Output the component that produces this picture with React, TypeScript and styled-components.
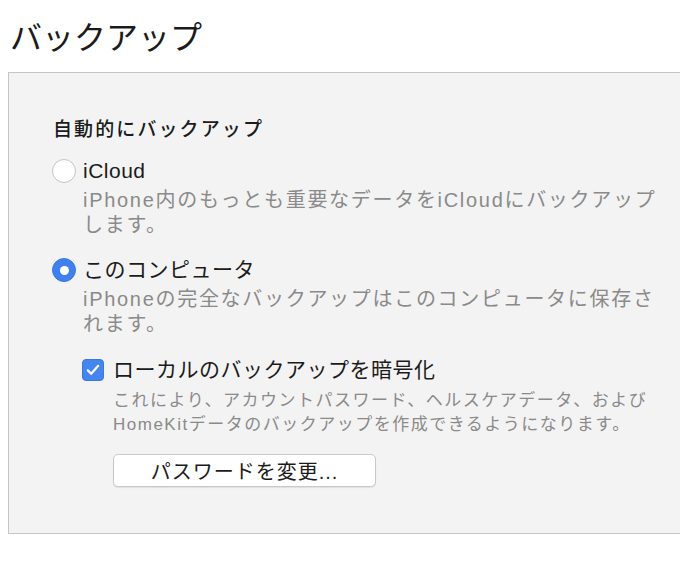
import styled, { createGlobalStyle } from "styled-components";

const GlobalStyle = createGlobalStyle`
  html, body {
    margin: 0;
    padding: 0;
    background: #ffffff;
    overflow: hidden;
  }
  body {
    font-family: "Liberation Sans", "Noto Sans CJK JP", sans-serif;
    color: #1b1b1b;
  }
`;

const Page = styled.div`
  width: 680px;
  height: 565px;
  padding: 18px 0 0 8px;
  box-sizing: border-box;
`;

const Title = styled.h1`
  margin: 0 0 14px 2px;
  font-size: 32px;
  line-height: 40px;
  font-weight: 400;
  letter-spacing: 0;
`;

const Panel = styled.section`
  margin-right: -20px;
  background: #f3f3f3;
  border: 1px solid #c6c6c6;
  padding: 44px 0 46px 43px;
  display: flex;
  flex-direction: column;
`;

const Heading = styled.div`
  font-size: 19px;
  line-height: 26px;
  font-weight: 500;
  letter-spacing: 2.1px;
  margin-left: 1px;
`;

const OptionRow = styled.label<{ $top: number }>`
  display: flex;
  align-items: center;
  gap: 7px;
  height: 28px;
  margin-top: ${({ $top }) => $top}px;
`;

const Radio = styled.span<{ $checked?: boolean }>`
  width: 24px;
  height: 24px;
  border-radius: 50%;
  box-sizing: border-box;
  flex: none;
  display: flex;
  align-items: center;
  justify-content: center;
  background: ${({ $checked }) => ($checked ? "#3f80ee" : "#ffffff")};
  border: 1px solid ${({ $checked }) => ($checked ? "#3a78e4" : "#c4c4c4")};

  &::after {
    content: "";
    display: ${({ $checked }) => ($checked ? "block" : "none")};
    width: 9px;
    height: 9px;
    border-radius: 50%;
    background: #ffffff;
  }
`;

const OptionLabel = styled.span`
  font-size: 21px;
  line-height: 28px;
  letter-spacing: 0.5px;
`;

const Description = styled.p<{ $indent: number }>`
  margin: 3px 0 0 ${({ $indent }) => $indent}px;
  font-size: 20px;
  line-height: 25px;
  color: #8a8a8a;
  letter-spacing: 1.7px;
`;

const CheckRow = styled.label`
  display: flex;
  align-items: center;
  gap: 9px;
  height: 28px;
  margin: 19px 0 0 30px;
`;

const CheckBox = styled.span`
  width: 22px;
  height: 22px;
  border-radius: 4px;
  background: #4585ef;
  border: 1px solid #3b78e0;
  box-sizing: border-box;
  flex: none;
  display: flex;
  align-items: center;
  justify-content: center;
`;

const SmallNote = styled.p`
  margin: 5px 0 0 61px;
  font-size: 17px;
  line-height: 24px;
  color: #8a8a8a;
  letter-spacing: 1.5px;
`;

const Button = styled.button`
  margin: 17px 0 0 61px;
  width: 263px;
  height: 33px;
  background: #ffffff;
  border: 1px solid #c9c9c9;
  border-radius: 5px;
  box-shadow: 0 1px 1px rgba(0, 0, 0, 0.08);
  font-family: "Liberation Sans", "Noto Sans CJK JP", sans-serif;
  font-size: 20px;
  color: #1b1b1b;
  letter-spacing: 1px;
  padding: 0;
  text-align: center;
`;

export default function App() {
  return (
    <>
      <GlobalStyle />
      <Page>
        <Title>バックアップ</Title>
        <Panel>
          <Heading>自動的にバックアップ</Heading>

          <OptionRow $top={14}>
            <Radio />
            <OptionLabel>iCloud</OptionLabel>
          </OptionRow>
          <Description $indent={31}>
            iPhone内のもっとも重要なデータをiCloudにバックアップ
            <br />
            します。
          </Description>

          <OptionRow $top={18}>
            <Radio $checked />
            <OptionLabel>このコンピュータ</OptionLabel>
          </OptionRow>
          <Description $indent={31}>
            iPhoneの完全なバックアップはこのコンピュータに保存さ
            <br />
            れます。
          </Description>

          <CheckRow>
            <CheckBox>
              <svg width="14" height="12" viewBox="0 0 14 12">
                <path
                  d="M1.8 6.4 L5.2 9.8 L12.2 1.8"
                  fill="none"
                  stroke="#ffffff"
                  strokeWidth="2.2"
                  strokeLinecap="round"
                  strokeLinejoin="round"
                />
              </svg>
            </CheckBox>
            <OptionLabel>ローカルのバックアップを暗号化</OptionLabel>
          </CheckRow>
          <SmallNote>
            これにより、アカウントパスワード、ヘルスケアデータ、および
            <br />
            HomeKitデータのバックアップを作成できるようになります。
          </SmallNote>

          <div>
            <Button type="button">パスワードを変更...</Button>
          </div>
        </Panel>
      </Page>
    </>
  );
}
